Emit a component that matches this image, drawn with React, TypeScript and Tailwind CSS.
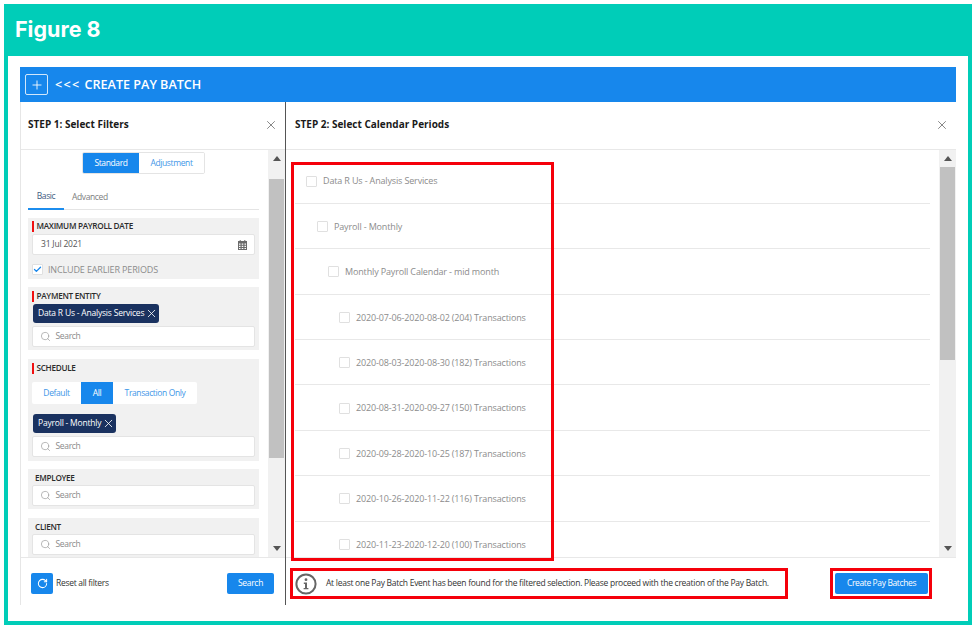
import React from 'react';
import { Check, Plus, RotateCw, Search, X } from 'lucide-react';

const PERIODS = [
  '2020-07-06-2020-08-02 (204) Transactions',
  '2020-08-03-2020-08-30 (182) Transactions',
  '2020-08-31-2020-09-27 (150) Transactions',
  '2020-09-28-2020-10-25 (187) Transactions',
  '2020-10-26-2020-11-22 (116) Transactions',
  '2020-11-23-2020-12-20 (100) Transactions',
];

function Scrollbar({ thumbTop, thumbHeight }: { thumbTop: string; thumbHeight: string }) {
  return (
    <div className="flex h-full w-[17px] shrink-0 flex-col items-center bg-[#f1f1f1]">
      <div className="flex h-[17px] shrink-0 items-center justify-center">
        <div className="h-0 w-0 border-x-[4px] border-b-[5px] border-x-transparent border-b-[#555]" />
      </div>
      <div className={`w-[15px] shrink-0 bg-[#c1c1c1] ${thumbTop} ${thumbHeight}`} />
      <div className="flex-1" />
      <div className="flex h-[17px] shrink-0 items-center justify-center">
        <div className="h-0 w-0 border-x-[4px] border-t-[5px] border-x-transparent border-t-[#555]" />
      </div>
    </div>
  );
}

function SearchBox({ className = '' }: { className?: string }) {
  return (
    <div className={`flex h-[21px] items-center rounded-[2px] border border-[#e4e4e4] bg-white pl-[7px] text-[8.5px] tracking-[-0.33px] text-[#8a8a8a] ${className}`}>
      <Search size={11} strokeWidth={1.5} className="mr-[4.5px] text-[#9a9a9a]" />
      Search
    </div>
  );
}

function Chip({ label }: { label: string }) {
  return (
    <div className="flex h-[19px] w-fit items-center gap-[1px] rounded-[3px] bg-[#1a3260] pl-[5px] pr-[1px] text-[8.5px] tracking-[-0.2px] text-white">
      {label}
      <X size={13} strokeWidth={1.5} />
    </div>
  );
}

function CardLabel({ text, required }: { text: string; required?: boolean }) {
  return (
    <div className={`flex h-[11px] items-center text-[8.2px] font-semibold leading-none tracking-[-0.3px] text-[#2b2b2b] ${required ? '' : 'pl-[3px]'}`}>
      {required && <span className="mr-[3px] h-[11px] w-[1.5px] bg-[#f01010]" />}
      {text}
    </div>
  );
}

function CalendarIcon() {
  return (
    <svg width="9" height="10" viewBox="0 0 9 10" fill="#6b6b6b" aria-hidden="true">
      <rect x="1.7" y="0" width="1" height="2" />
      <rect x="6.3" y="0" width="1" height="2" />
      <path d="M0 1h9v9H0zM1 3.5v1.3h1.5V3.5zm2.7 0v1.3h1.6V3.5zm2.8 0v1.3H8V3.5zM1 5.8v1.3h1.5V5.8zm2.7 0v1.3h1.6V5.8zm2.8 0v1.3H8V5.8zM1 8v1h1.5V8zm2.7 0v1h1.6V8zm2.8 0v1H8V8z" fillRule="evenodd" />
    </svg>
  );
}

function InfoIcon() {
  return (
    <svg width="22" height="22" viewBox="0 0 22 22" fill="none" aria-hidden="true">
      <circle cx="11" cy="11" r="9.6" stroke="#666" strokeWidth="2" />
      <circle cx="11" cy="6.7" r="1.4" fill="#666" />
      <path d="M8.8 9.6h3.2v5.4h1.4v1.3H8.6V15H10v-4.1H8.8z" fill="#666" />
    </svg>
  );
}

function PeriodRow({ label, indent }: { label: string; indent: string }) {
  return (
    <div className={`flex h-[45.4px] shrink-0 items-center border-b border-[#e8e8e8] pt-px text-[9px] tracking-[-0.15px] text-[#8c8c8c] ${indent}`}>
      <span className="mr-[6px] h-[11px] w-[11px] rounded-[1px] border border-[#e0e0e0] bg-white" />
      {label}
    </div>
  );
}

export default function App() {
  return (
    <div className="h-[628px] w-[976px] overflow-hidden bg-white p-[4px] font-['Open_Sans',sans-serif]">
      <div className="flex h-[621px] w-[968px] flex-col bg-[#00cdb8] px-[4px] pb-[4px]">
        <div className="flex h-[52px] shrink-0 items-center pb-[2px] pl-[7px] font-['Inter',sans-serif] text-[21.5px] font-bold text-white">
          Figure 8
        </div>

        <div className="relative flex-1 bg-white px-[12px] pt-[11px]">
          <div className="flex h-[35px] items-center bg-[#1787ec] pl-[5px] text-white">
            <div className="flex h-[21px] w-[23px] items-center justify-center rounded-[2px] border border-white/80">
              <Plus size={14} strokeWidth={1.5} />
            </div>
            <span className="ml-[7px] pt-px text-[12.6px] font-semibold tracking-[1.3px]">&lt;&lt;&lt;</span>
            <span className="ml-[4px] pt-px text-[12.6px] font-semibold">CREATE PAY BATCH</span>
          </div>

          <div className="flex h-[503px]">
            {/* step 1 */}
            <div className="flex w-[266px] shrink-0 flex-col border-x border-x-[#e6e6e6] border-r-[#555]">
              <div className="flex h-[48px] shrink-0 items-center justify-between border-b border-[#e8e8e8] pb-[2px] pl-[7px] pr-[7px]">
                <span className="text-[10px] font-bold text-[#1a1a1a]">STEP 1: Select Filters</span>
                <X size={14} strokeWidth={1.5} className="text-[#777]" />
              </div>
              <div className="flex h-[407px] shrink-0">
                <div className="min-w-0 flex-1 overflow-hidden pl-[7px] pr-[9px]">
                  <div className="flex h-[23px] justify-center pt-[2px]">
                    <div className="flex h-[22px] overflow-hidden rounded-[2px] border border-[#e4e4e4] text-[8.5px] tracking-[-0.38px]">
                      <span className="flex w-[56px] items-center justify-center bg-[#1787ec] text-white">Standard</span>
                      <span className="flex w-[65px] items-center justify-center bg-white text-[#3f97e8]">Adjustment</span>
                    </div>
                  </div>
                  <div className="mt-[12px] flex h-[25px] border-b border-[#e4e4e4] text-[8.5px] tracking-[-0.38px]">
                    <span className="flex h-[25px] w-[36px] items-center justify-center border-b-2 border-[#1c8dee] text-[#3d5a80]">Basic</span>
                    <span className="flex h-[24px] items-center pl-[8px] text-[#7d7d7d]">Advanced</span>
                  </div>

                  <div className="mt-[8px] h-[61px] bg-[#f1f1f1] px-[4px] pt-[3px]">
                    <CardLabel text="MAXIMUM PAYROLL DATE" required />
                    <div className="mt-[2px] flex h-[21px] items-center justify-between rounded-[2px] border border-[#e4e4e4] bg-white pl-[8px] pr-[7px] text-[8.5px] tracking-[-0.2px] text-[#555]">
                      31 Jul 2021
                      <CalendarIcon />
                    </div>
                    <div className="mt-[9px] flex items-center text-[9px] leading-none tracking-[-0.15px] text-[#8c8c8c]">
                      <span className="mr-[5px] flex h-[11px] w-[11px] items-center justify-center rounded-[1px] border border-[#e0e0e0] bg-white">
                        <Check size={9} strokeWidth={3.5} className="text-[#1787ec]" />
                      </span>
                      INCLUDE EARLIER PERIODS
                    </div>
                  </div>

                  <div className="mt-[8px] h-[63px] bg-[#f1f1f1] px-[4px] pt-[4px]">
                    <CardLabel text="PAYMENT ENTITY" required />
                    <div className="mt-[2px] pl-[1px]"><Chip label="Data R Us - Analysis Services" /></div>
                    <SearchBox className="mt-[3px]" />
                  </div>

                  <div className="mt-[9px] h-[102px] bg-[#f1f1f1] px-[4px] pt-[4px]">
                    <CardLabel text="SCHEDULE" required />
                    <div className="mt-[8px] flex h-[22px] w-fit rounded-[2px] bg-white text-[8.5px] tracking-[-0.38px] text-[#3f97e8]">
                      <span className="flex w-[49px] items-center justify-center">Default</span>
                      <span className="flex w-[32px] items-center justify-center bg-[#1787ec] text-white">All</span>
                      <span className="flex w-[84px] items-center justify-center">Transaction Only</span>
                    </div>
                    <div className="mt-[10px] pl-[1px]"><Chip label="Payroll - Monthly" /></div>
                    <SearchBox className="mt-[3px]" />
                  </div>

                  <div className="mt-[8px] h-[40px] bg-[#f1f1f1] px-[4px] pt-[4px]">
                    <CardLabel text="EMPLOYEE" />
                    <SearchBox className="mt-px" />
                  </div>

                  <div className="mt-[9px] h-[40px] bg-[#f1f1f1] px-[4px] pt-[4px]">
                    <CardLabel text="CLIENT" />
                    <SearchBox className="mt-px" />
                  </div>
                </div>
                <Scrollbar thumbTop="mt-[12px]" thumbHeight="h-[279px]" />
              </div>
              <div className="flex flex-1 items-start justify-between border-t border-[#e8e8e8] pl-[10px] pr-[11px] pt-[15px]">
                <div className="flex items-start">
                  <div className="flex h-[21px] w-[22px] items-center justify-center rounded-[2px] bg-[#1787ec] text-white">
                    <RotateCw size={11} strokeWidth={2.2} />
                  </div>
                  <span className="ml-[3px] mt-[4px] text-[8.5px] tracking-[-0.3px] text-[#333]">Reset all filters</span>
                </div>
                <div className="flex h-[21px] w-[47px] items-center justify-center rounded-[2px] bg-[#1787ec] text-[8.5px] tracking-[-0.3px] text-white">Search</div>
              </div>
            </div>

            {/* step 2 */}
            <div className="flex min-w-0 flex-1 flex-col">
              <div className="flex h-[48px] shrink-0 items-center justify-between border-b border-[#e8e8e8] pb-[2px] pl-[9px] pr-[7px]">
                <span className="text-[10px] font-bold text-[#1a1a1a]">STEP 2: Select Calendar Periods</span>
                <X size={14} strokeWidth={1.5} className="text-[#777]" />
              </div>
              <div className="flex h-[407px] shrink-0">
                <div className="min-w-0 flex-1 overflow-hidden pl-[9px] pr-[9px] pt-[8.5px]">
                  <PeriodRow label="Data R Us - Analysis Services" indent="pl-[11px]" />
                  <PeriodRow label="Payroll - Monthly" indent="pl-[22px]" />
                  <PeriodRow label="Monthly Payroll Calendar - mid month" indent="pl-[33px]" />
                  {PERIODS.map((p) => (
                    <PeriodRow key={p} label={p} indent="pl-[44px]" />
                  ))}
                </div>
                <Scrollbar thumbTop="mt-0" thumbHeight="h-[193px]" />
              </div>
              <div className="flex flex-1 items-start justify-between border-t border-[#e8e8e8] pl-[9px] pr-[28px] pt-[15px]">
                <div className="flex h-[21px] items-center text-[8.5px] tracking-[-0.27px] text-[#333]">
                  <InfoIcon />
                  <span className="ml-[9px]">At least one Pay Batch Event has been found for the filtered selection. Please proceed with the creation of the Pay Batch.</span>
                </div>
                <div className="flex h-[21px] w-[93px] items-center justify-center rounded-[2px] bg-[#1787ec] text-[8.5px] tracking-[-0.38px] text-white">Create Pay Batches</div>
              </div>
            </div>
          </div>

          {/* red callouts */}
          <div className="absolute left-[283px] top-[106px] h-[399px] w-[263px] border-[3px] border-[#f5000a]" />
          <div className="absolute left-[282px] top-[512px] h-[31px] w-[498px] border-[3px] border-[#f5000a]" />
          <div className="absolute left-[822px] top-[512px] h-[31px] w-[102px] border-[3px] border-[#f5000a]" />
        </div>
      </div>
    </div>
  );
}
